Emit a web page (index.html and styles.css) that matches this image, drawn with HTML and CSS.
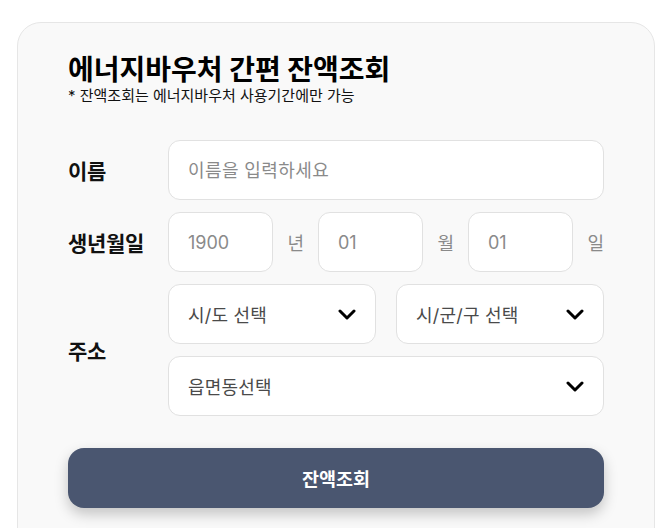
FILE: index.html
```html
<!DOCTYPE html>
<html lang="ko">
<head>
<meta charset="utf-8">
<title>에너지바우처 간편 잔액조회</title>
<link rel="stylesheet" href="styles.css">
</head>
<body>
<div class="page">
  <section class="card">
    <h1 class="title">에너지바우처 간편 잔액조회</h1>
    <p class="note">* 잔액조회는 에너지바우처 사용기간에만 가능</p>
    <form class="form">
      <div class="row">
        <label class="label">이름</label>
        <div class="fields">
          <input class="input" type="text" placeholder="이름을 입력하세요">
        </div>
      </div>
      <div class="row">
        <label class="label">생년월일</label>
        <div class="fields birth">
          <input class="input" type="text" placeholder="1900">
          <span class="unit">년</span>
          <input class="input" type="text" placeholder="01">
          <span class="unit">월</span>
          <input class="input" type="text" placeholder="01">
          <span class="unit">일</span>
        </div>
      </div>
      <div class="row">
        <label class="label">주소</label>
        <div class="fields address">
          <div class="addr-line">
            <div class="select"><span>시/도 선택</span><svg class="chev" width="18" height="11" viewBox="0 0 18 11"><polyline points="2,2 9,9 16,2" fill="none" stroke="#000" stroke-width="3" stroke-linecap="round" stroke-linejoin="round"/></svg></div>
            <div class="select"><span>시/군/구 선택</span><svg class="chev" width="18" height="11" viewBox="0 0 18 11"><polyline points="2,2 9,9 16,2" fill="none" stroke="#000" stroke-width="3" stroke-linecap="round" stroke-linejoin="round"/></svg></div>
          </div>
          <div class="select"><span>읍면동선택</span><svg class="chev" width="18" height="11" viewBox="0 0 18 11"><polyline points="2,2 9,9 16,2" fill="none" stroke="#000" stroke-width="3" stroke-linecap="round" stroke-linejoin="round"/></svg></div>
        </div>
      </div>
      <button class="submit" type="button">잔액조회</button>
    </form>
  </section>
</div>
</body>
</html>
```

FILE: styles.css
```css
* { box-sizing: border-box; }
html, body { margin: 0; padding: 0; background: #ffffff; }
body {
  font-family: "Inter", "Noto Sans CJK KR", "Noto Sans", sans-serif;
  color: #111;
  overflow: hidden;
}
.page {
  padding: 22px 9px 0 17px;
}
.card {
  width: 638px;
  min-height: 560px;
  background: #f9f9f9;
  border: 1px solid #e6e6e6;
  border-radius: 24px;
  padding: 31px 50px 40px 50px;
}
.title {
  margin: 0;
  font-size: 28px;
  line-height: 32px;
  font-weight: 700;
  letter-spacing: 0;
  color: #000;
}
.note {
  margin: 0;
  font-size: 15px;
  line-height: 20px;
  letter-spacing: 0;
  color: #111;
}
.form {
  margin-top: 34px;
  display: flex;
  flex-direction: column;
  gap: 12px;
}
.row {
  display: flex;
  align-items: center;
}
.label {
  width: 100px;
  flex: none;
  font-size: 21px;
  font-weight: 700;
  letter-spacing: -0.3px;
  color: #111;
}
.fields {
  flex: 1;
  display: flex;
  min-width: 0;
}
.input {
  width: 100%;
  min-width: 0;
  height: 60px;
  border: 1px solid #e1e1e1;
  border-radius: 12px;
  background: #fff;
  padding: 0 19px;
  font-family: inherit;
  font-size: 18px;
  letter-spacing: 0.4px;
  color: #333;
  outline: none;
}
.input::placeholder { color: #8a8a8a; }
.birth {
  align-items: center;
  gap: 14px;
}
.birth .input { flex: 1; letter-spacing: 0; }
.unit {
  flex: none;
  font-size: 18px;
  color: #8a8a8a;
}
.address {
  flex-direction: column;
  gap: 12px;
}
.addr-line {
  display: flex;
  gap: 20px;
}
.addr-line .select { flex: 1; }
.select {
  height: 60px;
  border: 1px solid #e1e1e1;
  border-radius: 12px;
  background: #fff;
  padding: 0 19px 0 19px;
  display: flex;
  align-items: center;
  justify-content: space-between;
  font-size: 18px;
  letter-spacing: 0.2px;
  color: #4a4a4a;
}
.chev { flex: none; }
.submit {
  margin-top: 20px;
  height: 60px;
  border: 0;
  border-radius: 16px;
  background: #4a5670;
  color: #fff;
  font-family: inherit;
  font-size: 18.5px;
  font-weight: 700;
  letter-spacing: 0;
  box-shadow: 0 6px 14px rgba(0, 0, 0, 0.22);
}
```
